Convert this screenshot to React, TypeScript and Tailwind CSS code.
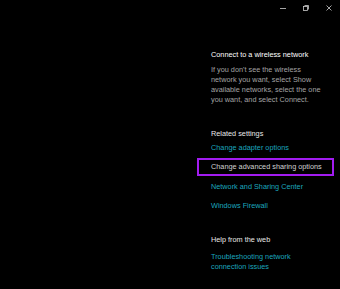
const links = ["Change adapter options"];

function WindowControls() {
  return (
    <div className="flex h-[15px] justify-end">
      <button className="flex w-[23px] items-center justify-center">
        <svg width="6" height="6" viewBox="0 0 6 6">
          <path d="M0 3.5h6" stroke="#cfcfcf" strokeWidth="0.8" />
        </svg>
      </button>
      <button className="flex w-[23px] items-center justify-center">
        <svg width="6" height="6" viewBox="0 0 6 6" fill="none">
          <rect x="0.5" y="1.5" width="4" height="4" stroke="#cfcfcf" strokeWidth="0.8" />
          <path d="M1.5 0.5h4v4" stroke="#cfcfcf" strokeWidth="0.8" />
        </svg>
      </button>
      <button className="flex w-[23px] items-center justify-center">
        <svg width="6" height="6" viewBox="0 0 6 6">
          <path d="M0.5 0.5l5 5M5.5 0.5l-5 5" stroke="#cfcfcf" strokeWidth="0.8" />
        </svg>
      </button>
    </div>
  );
}

export default function App() {
  return (
    <div
      className="h-[289px] w-[340px] overflow-hidden bg-black text-[7.3px] leading-[10px] antialiased"
      style={{ fontFamily: '"Liberation Sans", Arial, sans-serif' }}
    >
      <WindowControls />
      <div className="flex">
        <div className="flex-1" />
        <div className="w-[129px] pt-[35px]">
          <p className="text-white">Connect to a wireless network</p>
          <p className="mt-[5px] text-[#a3a3a3]">
            If you don't see the wireless
            <br />
            network you want, select Show
            <br />
            available networks, select the one
            <br />
            you want, and select Connect.
          </p>

          <p className="mt-[24px] text-[#e8e8e8]">Related settings</p>
          {links.map((l) => (
            <a key={l} className="mt-[4px] block text-[#1ba6bd]">
              {l}
            </a>
          ))}
          <a className="-ml-[14px] mt-[5px] block w-[137px] border-2 border-[#a21cf0] py-[2px] pl-[12px] text-[#d2d2d2]">
            Change advanced sharing options
          </a>
          <a className="mt-[6px] block text-[#1ba6bd]">Network and Sharing Center</a>
          <a className="mt-[9px] block text-[#1ba6bd]">Windows Firewall</a>

          <p className="mt-[24px] text-[#e8e8e8]">Help from the web</p>
          <a className="mt-[7px] block text-[#1ba6bd]">
            Troubleshooting network
            <br />
            connection issues
          </a>
        </div>
      </div>
    </div>
  );
}
